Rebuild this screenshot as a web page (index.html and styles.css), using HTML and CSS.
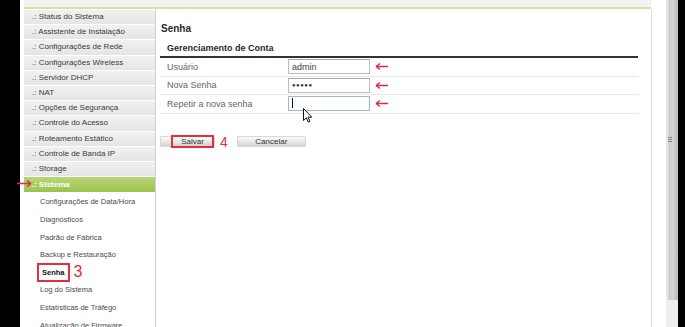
FILE: index.html
```html
<!DOCTYPE html>
<html lang="pt">
<head>
    <meta charset="UTF-8">
    <title>Senha</title>
    <link rel="stylesheet" href="styles.css">
</head>
<body>
    <div class="screen">
        <div class="page">
            <div class="topbar"></div>
            <div class="main">
                <nav class="menu">
                    <ul class="menu-list">
                        <li class="menu-item">.: Status do Sistema</li>
                        <li class="menu-item">.: Assistente de Instalação</li>
                        <li class="menu-item">.: Configurações de Rede</li>
                        <li class="menu-item">.: Configurações Wireless</li>
                        <li class="menu-item">.: Servidor DHCP</li>
                        <li class="menu-item">.: NAT</li>
                        <li class="menu-item">.: Opções de Segurança</li>
                        <li class="menu-item">.: Controle do Acesso</li>
                        <li class="menu-item">.: Roteamento Estático</li>
                        <li class="menu-item">.: Controle de Banda IP</li>
                        <li class="menu-item">.: Storage</li>
                        <li class="menu-item active">.: Sistema</li>
                    </ul>
                    <ul class="sub-list">
                        <li class="sub-item">Configurações de Data/Hora</li>
                        <li class="sub-item">Diagnósticos</li>
                        <li class="sub-item">Padrão de Fábrica</li>
                        <li class="sub-item">Backup e Restauração</li>
                        <li class="sub-item current"><span class="mark">Senha</span><span class="step">3</span></li>
                        <li class="sub-item">Log do Sistema</li>
                        <li class="sub-item">Estatísticas de Tráfego</li>
                        <li class="sub-item">Atualização de Firmware</li>
                    </ul>
                </nav>

                <section class="content">
                    <h1 class="page-title">Senha</h1>
                    <div class="panel">
                        <h2 class="panel-title">Gerenciamento de Conta</h2>
                        <div class="form-row">
                            <label class="form-label">Usuário</label>
                            <input class="form-input" type="text" value="admin">
                            <svg class="hint-arrow" viewBox="0 0 13 9"><path d="M1 4.5H13M1 4.5L5 1.5M1 4.5L5 7.5" /></svg>
                        </div>
                        <div class="form-row">
                            <label class="form-label">Nova Senha</label>
                            <div class="form-input dots">●●●●●</div>
                            <svg class="hint-arrow" viewBox="0 0 13 9"><path d="M1 4.5H13M1 4.5L5 1.5M1 4.5L5 7.5" /></svg>
                        </div>
                        <div class="form-row">
                            <label class="form-label">Repetir a nova senha</label>
                            <div class="form-input focused"><span class="caret"></span></div>
                            <svg class="hint-arrow" viewBox="0 0 13 9"><path d="M1 4.5H13M1 4.5L5 1.5M1 4.5L5 7.5" /></svg>
                        </div>
                    </div>

                    <div class="actions">
                        <button class="btn btn-save">Salvar</button>
                        <span class="step step-4">4</span>
                        <button class="btn btn-cancel">Cancelar</button>
                    </div>

                    <svg class="pointer" viewBox="0 0 10 15">
                        <path d="M0.5 0.5V12.5L3.3 9.8L5.3 14.2L7 13.4L5 9.2H8.8Z" />
                    </svg>
                </section>
            </div>
        </div>

        <div class="scrollbar">
            <div class="thumb"><span class="grip"></span></div>
        </div>

        <svg class="side-arrow" viewBox="0 0 15 9"><path d="M0 4.5H14M14 4.5L10 1.5M14 4.5L10 7.5" /></svg>
    </div>
</body>
</html>
```

FILE: styles.css
```css
/* General */
body {
    margin: 0;
    background: #000;
    font-family: "Liberation Sans", Arial, sans-serif;
    color: #333;
}

.screen {
    position: relative;
    display: flex;
    height: 327px;
    overflow: hidden;
}

.page {
    width: 642px;
    margin-left: 20px;
    padding-left: 4px;
    background: #fff;
}

.topbar {
    width: 627px;
    height: 7px;
    background: #f3f3f3;
    border-bottom: 2px solid #d3e29c;
}

.main {
    display: flex;
    height: 318px;
}

/* Side menu */
.menu {
    width: 131px;
    border-right: 1px solid #d2d2d2;
}

.menu-list,
.sub-list {
    list-style: none;
    margin: 0;
    padding: 0;
}

.menu-list {
    padding-top: 1px;
}

.menu-item {
    height: 14.2px;
    line-height: 14.2px;
    padding-left: 8px;
    font-size: 8px;
    color: #3a3a3a;
    background: linear-gradient(#f1f1f1, #e5e5e5);
    border-bottom: 1px solid #fff;
    white-space: nowrap;
}

.menu-item.active {
    height: 15px;
    line-height: 15px;
    font-weight: bold;
    color: #fff;
    background: linear-gradient(#b9d67a, #9cc34c);
}

.sub-item {
    display: flex;
    align-items: center;
    height: 17.6px;
    padding-left: 16px;
    font-size: 7.5px;
    color: #4a4a4a;
    white-space: nowrap;
}

.sub-item.current {
    padding-left: 13px;
    font-weight: bold;
    color: #111;
}

.mark {
    display: inline-block;
    height: 15px;
    line-height: 15px;
    padding: 0 3px;
    border: 2px solid #e0303c;
}

.step {
    margin-left: 4px;
    font-size: 16px;
    font-weight: normal;
    color: #e0303c;
}

/* Content */
.content {
    position: relative;
    width: 495px;
    border-right: 1px solid #e0e0e0;
}

.page-title {
    margin: 13px 0 0 5px;
    font-size: 10px;
    line-height: 14px;
    color: #2a2a2a;
}

.panel {
    width: 478px;
    margin: 4px 0 0 4px;
}

.panel-title {
    margin: 0;
    padding-left: 7px;
    font-size: 9px;
    line-height: 16px;
    color: #2a2a2a;
    border-bottom: 2px solid #333;
}

.form-row {
    display: flex;
    align-items: center;
    height: 17.5px;
    border-bottom: 1px solid #e8e8e8;
}

.form-label {
    width: 121px;
    padding-left: 7px;
    font-size: 9px;
    color: #666;
}

.form-input {
    box-sizing: border-box;
    width: 82px;
    height: 15px;
    margin: 0;
    padding: 0 3px;
    font-family: inherit;
    font-size: 9px;
    line-height: 13px;
    color: #444;
    background: #fff;
    border: 1px solid #bdbdbd;
    border-top-color: #a8a8a8;
}

.form-input.dots {
    font-size: 6px;
    letter-spacing: 0.5px;
    color: #333;
}

.form-input.focused {
    border-color: #9fb6cc;
}

.caret {
    display: inline-block;
    width: 1px;
    height: 10px;
    margin-top: 1px;
    background: #111;
}

.hint-arrow {
    width: 13px;
    height: 9px;
    margin-left: 5px;
    fill: none;
    stroke: #e0284a;
    stroke-width: 1.4;
}

/* Buttons */
.actions {
    display: flex;
    align-items: center;
    margin: 21px 0 0 4px;
}

.btn {
    position: relative;
    height: 11px;
    padding: 0;
    font-family: inherit;
    font-size: 8px;
    line-height: 9px;
    color: #333;
    background: linear-gradient(#fbfbfb, #d4d4d4);
    border: 1px solid #d8d8d8;
    border-radius: 1px;
}

.btn-save {
    width: 55px;
    padding-left: 10px;
}

.btn-save::after {
    content: "";
    position: absolute;
    left: 10px;
    right: 0;
    top: -2px;
    bottom: -2px;
    border: 2px solid #e0303c;
}

.step-4 {
    margin: 0 9px 0 5px;
    font-size: 14px;
    line-height: 14px;
}

.btn-cancel {
    width: 69px;
}

/* Overlays */
.pointer {
    position: absolute;
    left: 147px;
    top: 99px;
    width: 10px;
    height: 15px;
    fill: #fff;
    stroke: #111;
    stroke-width: 1;
    stroke-linejoin: round;
}

.side-arrow {
    position: absolute;
    left: 17px;
    top: 179px;
    width: 15px;
    height: 9px;
    fill: none;
    stroke: #e0284a;
    stroke-width: 1.5;
}

/* Scrollbar */
.scrollbar {
    width: 12px;
    background: #eeeeee;
}

.thumb {
    position: relative;
    height: 300px;
    background: linear-gradient(to right, #e4e4e4 0, #e4e4e4 2px, #c9c9c9 3px, #d6d6d6 7px, #c2c2c2 10px, #b8b8b8 12px);
}

.grip {
    position: absolute;
    left: 2px;
    top: 137px;
    width: 4px;
    height: 5px;
    background: repeating-linear-gradient(#888 0, #888 1px, #d0d0d0 1px, #d0d0d0 2px);
}
```
